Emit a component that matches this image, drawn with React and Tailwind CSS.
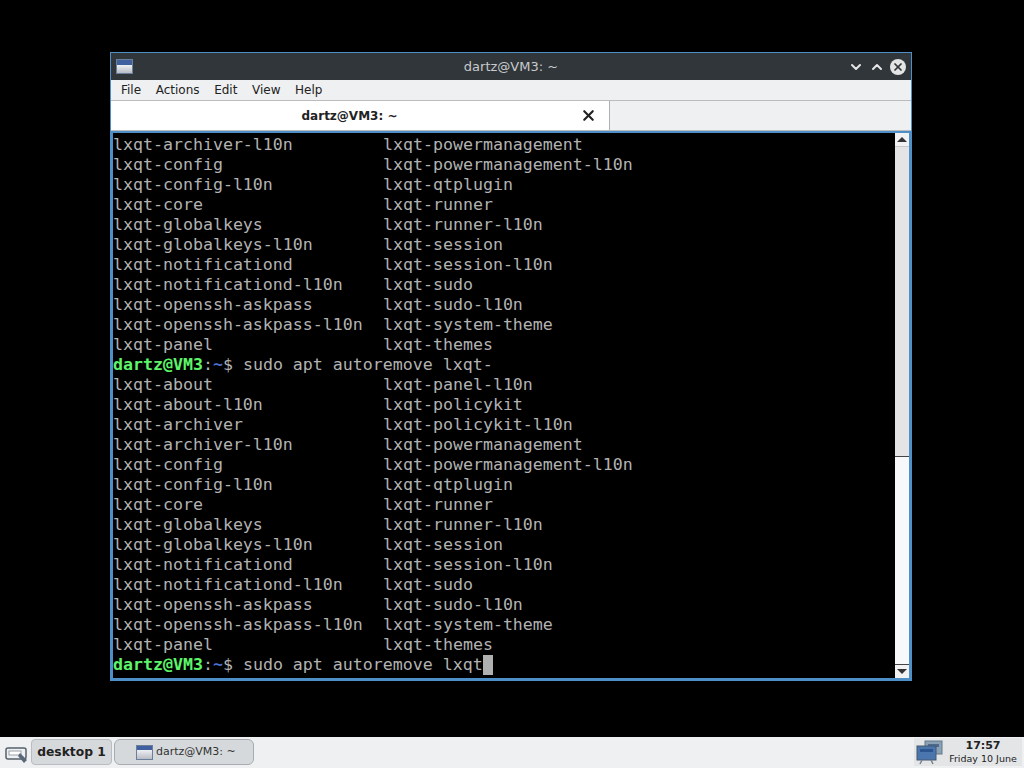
import { ChevronDown, ChevronUp, X } from 'lucide-react'

const ROWS_TOP = [
  ['lxqt-archiver-l10n', 'lxqt-powermanagement'],
  ['lxqt-config', 'lxqt-powermanagement-l10n'],
  ['lxqt-config-l10n', 'lxqt-qtplugin'],
  ['lxqt-core', 'lxqt-runner'],
  ['lxqt-globalkeys', 'lxqt-runner-l10n'],
  ['lxqt-globalkeys-l10n', 'lxqt-session'],
  ['lxqt-notificationd', 'lxqt-session-l10n'],
  ['lxqt-notificationd-l10n', 'lxqt-sudo'],
  ['lxqt-openssh-askpass', 'lxqt-sudo-l10n'],
  ['lxqt-openssh-askpass-l10n', 'lxqt-system-theme'],
  ['lxqt-panel', 'lxqt-themes'],
]

const ROWS_BOTTOM = [
  ['lxqt-about', 'lxqt-panel-l10n'],
  ['lxqt-about-l10n', 'lxqt-policykit'],
  ['lxqt-archiver', 'lxqt-policykit-l10n'],
  ...ROWS_TOP,
]

function WindowIcon({ className }) {
  return (
    <div className={`flex flex-col border border-[#6a7f9c] ${className}`}>
      <div className="h-[35%] bg-[#3f5f9e]" />
      <div className="flex-1 bg-gradient-to-b from-[#eef0f4] to-[#b9bcc4]" />
    </div>
  )
}

function Row({ left, right }) {
  return (
    <div className="flex h-5 leading-5 whitespace-pre">
      <span className="w-[270px]">{left}</span>
      <span>{right}</span>
    </div>
  )
}

function Prompt({ command, cursor }) {
  return (
    <div className="flex h-5 leading-5 whitespace-pre">
      <span className="font-bold text-[#5df56a]">dartz@VM3</span>
      <span>:</span>
      <span className="font-bold text-[#4a6fd0]">~</span>
      <span>$ {command}</span>
      {cursor && <span className="h-5 w-[10px] bg-[#b0b0b0]" />}
    </div>
  )
}

function Scrollbar() {
  return (
    <div className="flex w-[14px] flex-col bg-[#f7f8f9]">
      <div className="flex h-[14px] items-center justify-center border-b border-[#c8c8c8] bg-[#f2f2f2]">
        <div className="h-0 w-0 border-x-[5px] border-b-[5px] border-x-transparent border-b-[#333]" />
      </div>
      <div className="h-[310px] border-b border-[#444] bg-[#e4e4e4]" />
      <div className="flex-1" />
      <div className="flex h-[14px] items-center justify-center border-t border-[#444] bg-[#f2f2f2]">
        <div className="h-0 w-0 border-x-[5px] border-t-[5px] border-x-transparent border-t-[#333]" />
      </div>
    </div>
  )
}

function PagerIcon() {
  return (
    <svg width="28" height="26" viewBox="0 0 28 26">
      <rect x="9" y="2" width="17" height="13" fill="#8aa0b4" stroke="#66798a" />
      <rect x="12" y="5" width="11" height="3" fill="#4d6a8c" />
      <rect x="1" y="7" width="19" height="14" fill="#4a76ad" stroke="#46586e" />
      <rect x="4" y="10" width="13" height="3" fill="#2c5590" />
      <path d="M6 21l-2 4M15 21l2 4" stroke="#7a838e" strokeWidth="1.5" />
    </svg>
  )
}

export default function App() {
  return (
    <div className="flex h-screen flex-col bg-black font-['DejaVu_Sans',sans-serif]">
      <div className="flex-1 pl-[110px] pt-[52px]">
        {/* Terminal window */}
        <div className="flex h-[629px] w-[802px] flex-col border border-[#4f8fc7] bg-[#eff0f1]">
          <div className="flex h-[27px] items-center bg-[#31363b] pl-[5px] pr-[5px]">
            <div className="w-[60px]">
              <WindowIcon className="h-[15px] w-[17px]" />
            </div>
            <div className="flex-1 text-center text-[13px] text-[#c8cacc]">dartz@VM3: ~</div>
            <div className="flex w-[60px] items-center justify-end gap-[5px]">
              <ChevronDown className="h-4 w-4 text-[#e6e6e6]" strokeWidth={3} />
              <ChevronUp className="h-4 w-4 text-[#e6e6e6]" strokeWidth={3} />
              <div className="flex h-4 w-4 items-center justify-center rounded-full bg-[#e4e4e4]">
                <X className="h-3 w-3 text-[#31363b]" strokeWidth={3.5} />
              </div>
            </div>
          </div>

          <div className="flex h-[20px] items-center gap-[14.6px] px-[10px] text-[12px] text-[#222]">
            <span>File</span>
            <span>Actions</span>
            <span>Edit</span>
            <span>View</span>
            <span>Help</span>
          </div>

          <div className="flex h-[31px] border-y border-[#bcbcbc]">
            <div className="flex w-[499px] items-center border-r border-[#b0b0b0] bg-white pr-[12px]">
              <div className="flex-1 pl-[8px] text-center text-[12px] font-bold text-[#222]">dartz@VM3: ~</div>
              <X className="h-[17px] w-[17px] text-[#222]" strokeWidth={3} />
            </div>
          </div>

          <div className="flex min-h-0 flex-1 border-2 border-[#4f8fc7]">
            <div className="flex-1 overflow-hidden bg-black pt-[2px] font-['DejaVu_Sans_Mono',monospace] text-[16.6px] text-[#b2b2b2]">
              {ROWS_TOP.map((r) => (
                <Row key={'a' + r[0]} left={r[0]} right={r[1]} />
              ))}
              <Prompt command="sudo apt autoremove lxqt-" />
              {ROWS_BOTTOM.map((r) => (
                <Row key={'b' + r[0]} left={r[0]} right={r[1]} />
              ))}
              <Prompt command="sudo apt autoremove lxqt" cursor />
            </div>
            <Scrollbar />
          </div>
        </div>
      </div>

      {/* Bottom panel */}
      <div className="flex h-[31px] items-center bg-[#eff0f1] pb-[1px] pl-[4px] pr-[2px]">
        <svg width="26" height="20" viewBox="0 0 26 20" className="mt-1">
          <rect x="2" y="4" width="20" height="11" rx="2" fill="#eef0f2" stroke="#55606c" strokeWidth="1.5" />
          <rect x="5" y="7" width="12" height="4" fill="#fff" stroke="#9aa2ac" />
          <path d="M16 9l7 7-3 3-6-7z" fill="#59677a" />
        </svg>
        <div className="ml-[1px] flex h-[26px] w-[81px] items-center justify-center rounded-[4px] border border-[#b9bcc0] bg-[#d6d9dc] text-[12.3px] font-bold text-[#222]">
          desktop 1
        </div>
        <div className="ml-[2px] flex h-[26px] w-[140px] items-center rounded-[6px] border border-[#a9acb0] bg-[#d6d9dc] pl-[21px] text-[11px] text-[#333]">
          <WindowIcon className="mr-[3px] h-[15px] w-[17px]" />
          dartz@VM3: ~
        </div>
        <div className="flex-1" />
        <div className="flex h-[28px] w-[108px] items-center bg-[#e3e5e7] pl-[2px]">
          <PagerIcon />
          <div className="flex-1 text-center text-[#222]">
            <div className="text-[11px] font-bold leading-[13px]">17:57</div>
            <div className="text-[9.5px] leading-[13px] whitespace-nowrap">Friday 10 June</div>
          </div>
        </div>
      </div>
    </div>
  )
}
